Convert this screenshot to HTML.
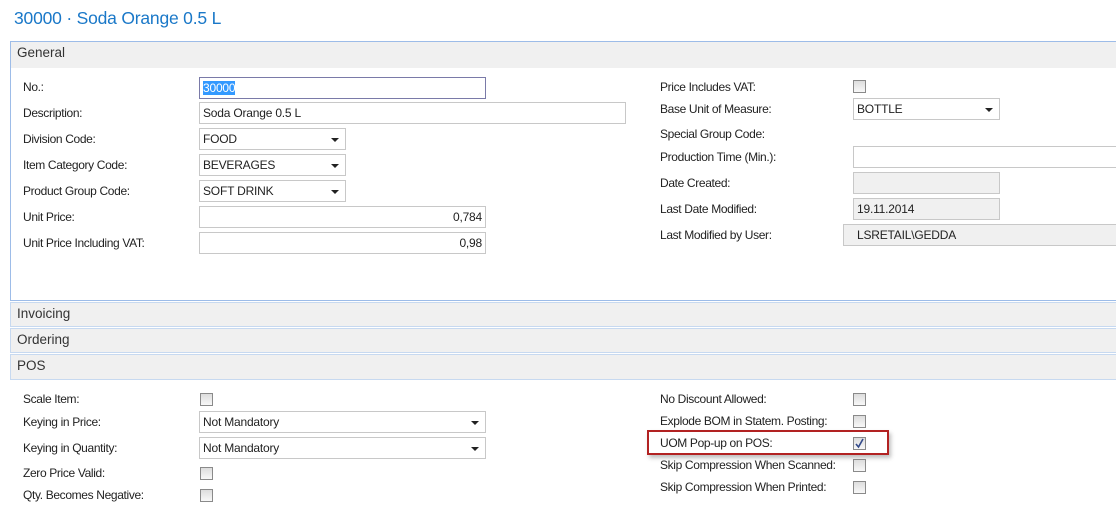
<!DOCTYPE html><html><head><style>
body{margin:0;width:1116px;height:510px;background:#fff;font-family:"Liberation Sans",sans-serif;font-size:12px;color:#222;position:relative;overflow:hidden}
.a{position:absolute}
.t{position:absolute;left:14px;top:8px;font-size:17.5px;color:#1a78c8;letter-spacing:-0.2px}
.panel{position:absolute;left:10px;right:-2px;border:1px solid #c7d9f0;background:#f0f0f0}
.hd{font-size:13.5px;color:#333;padding:3px 0 0 6px}
.lbl{position:absolute;font-size:12px;color:#222;letter-spacing:-0.35px}
.in{position:absolute;height:22px;border:1px solid #c8c8c8;background:#fff;box-sizing:border-box;font-size:12px;line-height:20px;padding:0 3px;letter-spacing:-0.2px}
.g{background:#f0f0f0}
.r{text-align:right}
.dd:after{content:"";position:absolute;right:6px;top:9px;border:4px solid transparent;border-top:4px solid #222;border-bottom:0}
.cb{position:absolute;width:11px;height:11px;border:1px solid #8a8a8a;background:linear-gradient(#ddd,#f8f8f8);}
</style></head><body>
<div class="t">30000 · Soda Orange 0.5 L</div>
<div class="panel" style="top:41px;height:258px;background:#fff;border-color:#9dbce8">
<div style="background:#f0f0f0;height:23px" class="hd">General</div></div>
<div class="panel" style="top:302px;height:23px"><div class="hd">Invoicing</div></div>
<div class="panel" style="top:328px;height:23px"><div class="hd">Ordering</div></div>
<div class="panel" style="top:354px;height:24px"><div class="hd">POS</div></div>

<div class="lbl" style="left:23px;top:80px">No.:</div>
<div class="in" style="left:199px;top:77px;width:287px;border-color:#7a7aa8"><span style="background:#3399ff;color:#fff">30000</span></div>
<div class="lbl" style="left:23px;top:106px">Description:</div>
<div class="in" style="left:199px;top:102px;width:427px">Soda Orange 0.5 L</div>
<div class="lbl" style="left:23px;top:132px">Division Code:</div>
<div class="in dd" style="left:199px;top:128px;width:147px">FOOD</div>
<div class="lbl" style="left:23px;top:158px">Item Category Code:</div>
<div class="in dd" style="left:199px;top:154px;width:147px">BEVERAGES</div>
<div class="lbl" style="left:23px;top:184px">Product Group Code:</div>
<div class="in dd" style="left:199px;top:180px;width:147px">SOFT DRINK</div>
<div class="lbl" style="left:23px;top:210px">Unit Price:</div>
<div class="in r" style="left:199px;top:206px;width:287px">0,784</div>
<div class="lbl" style="left:23px;top:236px">Unit Price Including VAT:</div>
<div class="in r" style="left:199px;top:232px;width:287px">0,98</div>

<div class="lbl" style="left:660px;top:80px">Price Includes VAT:</div>
<div class="cb" style="left:853px;top:80px"></div>
<div class="lbl" style="left:660px;top:102px">Base Unit of Measure:</div>
<div class="in dd" style="left:853px;top:98px;width:147px">BOTTLE</div>
<div class="lbl" style="left:660px;top:127px">Special Group Code:</div>
<div class="lbl" style="left:660px;top:150px">Production Time (Min.):</div>
<div class="in" style="left:853px;top:146px;width:270px"></div>
<div class="lbl" style="left:660px;top:176px">Date Created:</div>
<div class="in g" style="left:853px;top:172px;width:147px"></div>
<div class="lbl" style="left:660px;top:202px">Last Date Modified:</div>
<div class="in g" style="left:853px;top:198px;width:147px">19.11.2014</div>
<div class="lbl" style="left:660px;top:228px">Last Modified by User:</div>
<div class="in g" style="left:843px;top:224px;width:280px;padding-left:13px">LSRETAIL\GEDDA</div>

<div class="lbl" style="left:23px;top:392px">Scale Item:</div>
<div class="cb" style="left:200px;top:393px"></div>
<div class="lbl" style="left:23px;top:415px">Keying in Price:</div>
<div class="in dd" style="left:199px;top:411px;width:287px">Not Mandatory</div>
<div class="lbl" style="left:23px;top:441px">Keying in Quantity:</div>
<div class="in dd" style="left:199px;top:437px;width:287px">Not Mandatory</div>
<div class="lbl" style="left:23px;top:466px">Zero Price Valid:</div>
<div class="cb" style="left:200px;top:467px"></div>
<div class="lbl" style="left:23px;top:488px">Qty. Becomes Negative:</div>
<div class="cb" style="left:200px;top:489px"></div>

<div class="lbl" style="left:660px;top:392px">No Discount Allowed:</div>
<div class="cb" style="left:853px;top:393px"></div>
<div class="lbl" style="left:660px;top:414px">Explode BOM in Statem. Posting:</div>
<div class="cb" style="left:853px;top:415px"></div>
<div class="a" style="left:647px;top:430px;width:242px;height:25px;border:2px solid #b22222;box-sizing:border-box;box-shadow:2px 3px 4px rgba(0,0,0,.25)"></div>
<div class="lbl" style="left:660px;top:436px">UOM Pop-up on POS:</div>
<div class="cb" style="left:853px;top:437px"><svg width="11" height="11" style="position:absolute;left:0;top:0"><path d="M2 6 L4.5 9 L9 1" stroke="#334a8a" stroke-width="1.6" fill="none"/></svg></div>
<div class="lbl" style="left:660px;top:458px">Skip Compression When Scanned:</div>
<div class="cb" style="left:853px;top:459px"></div>
<div class="lbl" style="left:660px;top:480px">Skip Compression When Printed:</div>
<div class="cb" style="left:853px;top:481px"></div>
</body></html>
